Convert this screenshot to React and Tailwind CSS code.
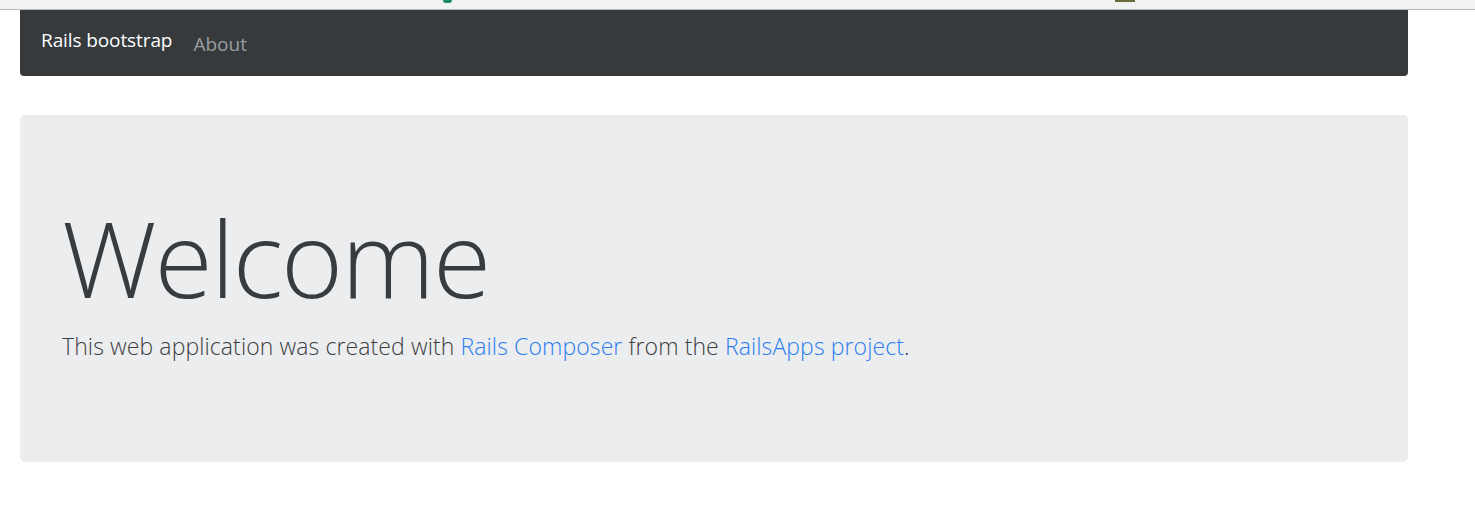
export default function App() {
  return (
    <div className="min-h-screen bg-white" style={{ fontFamily: '"Open Sans", "Noto Sans", sans-serif' }}>
      {/* browser chrome remnant */}
      <div className="relative h-[10px] bg-[#f2f2f2] border-b border-[#b9b9b9]">
        <span className="absolute left-[443px] top-0 h-[3px] w-[9px] rounded-b-full bg-[#1a8a6a]" />
        <span className="absolute left-[1115px] top-0 h-[2px] w-[20px] bg-[#6b6b3a]" />
      </div>

      <div className="w-[1388px] ml-[20px]">
        {/* navbar */}
        <nav className="h-[66px] bg-[#363a3d] rounded-b-[4px] flex items-center pl-[21px]">
          <a className="text-white text-[19px] leading-none mr-[21px] -mt-[5px] tracking-[-0.1px]">Rails bootstrap</a>
          <a className="text-[#9a9d9f] text-[19px] leading-none mt-[3px]">About</a>
        </nav>

        {/* jumbotron */}
        <div className="mt-[39px] h-[347px] bg-[#ecedef] rounded-[5px] pl-[42px] pt-[89px]">
          <h1 className="text-[106px] font-light leading-none text-[#393c3f] tracking-[-2px]">Welcome</h1>
          <p className="mt-[19px] text-[23px] font-light leading-[1.5] text-[#3c3f42] tracking-[0.1px]">
            This web application was created with{" "}
            <a className="text-[#2a7ef0]">Rails Composer</a> from the{" "}
            <a className="text-[#2a7ef0]">RailsApps project</a>.
          </p>
        </div>
      </div>
    </div>
  );
}
